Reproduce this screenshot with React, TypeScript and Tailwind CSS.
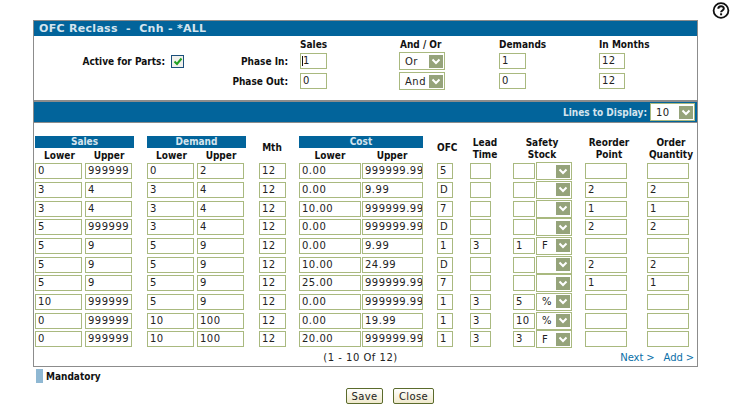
const font = "font-['DejaVu_Sans',sans-serif]";
const bold = "font-['DejaVu_Sans_Condensed','DejaVu_Sans',sans-serif] font-bold";

type RowData = {
  v: string[];
  unit?: string;
};

const rows: RowData[] = [
  { v: ["0", "999999", "0", "2", "12", "0.00", "999999.99", "5", "", "", "", ""], unit: "" },
  { v: ["3", "4", "3", "4", "12", "0.00", "9.99", "D", "", "", "2", "2"], unit: "" },
  { v: ["3", "4", "3", "4", "12", "10.00", "999999.99", "7", "", "", "1", "1"], unit: "" },
  { v: ["5", "999999", "3", "4", "12", "0.00", "999999.99", "D", "", "", "2", "2"], unit: "" },
  { v: ["5", "9", "5", "9", "12", "0.00", "9.99", "1", "3", "1", "", ""], unit: "F" },
  { v: ["5", "9", "5", "9", "12", "10.00", "24.99", "D", "", "", "2", "2"], unit: "" },
  { v: ["5", "9", "5", "9", "12", "25.00", "999999.99", "7", "", "", "1", "1"], unit: "" },
  { v: ["10", "999999", "5", "9", "12", "0.00", "999999.99", "1", "3", "5", "", ""], unit: "%" },
  { v: ["0", "999999", "10", "100", "12", "0.00", "19.99", "1", "3", "10", "", ""], unit: "%" },
  { v: ["0", "999999", "10", "100", "12", "20.00", "999999.99", "1", "3", "3", "", ""], unit: "F" },
];

function Field({ value, className, caret }: { value: string; className: string; caret?: boolean }) {
  return (
    <div
      className={`relative h-4 shrink-0 border border-[#a9b97f] bg-white pl-[2px] text-[10px] leading-[14px] tracking-[0.5px] text-[#222] overflow-hidden whitespace-nowrap ${className}`}
    >
      {value}
      {caret && <span className="absolute top-[2px] left-[1px] h-[10px] w-px bg-[#111]" />}
    </div>
  );
}

function Arrow() {
  return (
    <span className="flex h-[13px] w-[14px] shrink-0 items-center justify-center bg-[#95a37a]">
      <svg width="10" height="7" viewBox="0 0 10 7" fill="none" stroke="#fff" strokeWidth="2">
        <path d="M1.5 1.5 5 5l3.5-3.5" />
      </svg>
    </span>
  );
}

function Select({ value, className }: { value: string; className: string }) {
  return (
    <div
      className={`flex h-[18px] shrink-0 items-center justify-between border border-[#a9b97f] bg-white pr-[1px] pl-[5px] text-[10px] font-normal tracking-[0.5px] text-[#222] ${font} ${className}`}
    >
      <span>{value}</span>
      <Arrow />
    </div>
  );
}

function Head({ children, className }: { children: React.ReactNode; className: string }) {
  return <div className={`shrink-0 text-center text-[10px] leading-3 text-[#111] ${bold} ${className}`}>{children}</div>;
}

function Band({ children, className }: { children: React.ReactNode; className: string }) {
  return (
    <div className={`h-3 shrink-0 bg-[#02649b] text-center text-[10px] leading-3 text-[#d5e4ee] ${bold} ${className}`}>
      {children}
    </div>
  );
}

function HelpIcon() {
  return (
    <svg width="18" height="18" viewBox="0 0 18 18" fill="none" stroke="#111" className="shrink-0">
      <circle cx="9" cy="8.5" r="7.4" strokeWidth="1.8" />
      <path d="M6.3 6.7c0-3.3 5.5-3.3 5.5-.2 0 1.9-2.7 2-2.7 3.8" strokeWidth="2" />
      <path d="M9.1 11.3v2" strokeWidth="2" />
    </svg>
  );
}

function Button({ label, className }: { label: string; className: string }) {
  return (
    <div
      className={`flex h-4 items-center justify-center rounded-[2px] border border-[#5b6b2c] bg-gradient-to-b from-white to-[#efe9cc] text-[10px] tracking-[0.4px] text-[#222] ${className}`}
    >
      {label}
    </div>
  );
}

export default function App() {
  return (
    <div className={`relative h-[415px] w-[732px] overflow-hidden bg-white ${font}`}>
      <div className="flex h-5 justify-end pt-[2px] pr-[2px]">
        <HelpIcon />
      </div>

      <div className="mr-[34px] ml-[33px] h-[347px] border border-[#8c8c8c]">
        <div className="h-[15px] bg-[#02649b] pl-[5px] text-[11px] leading-[15px] font-bold tracking-[0.3px] text-[#d5e4ee]">
          OFC Reclass&nbsp; -&nbsp; Cnh -&nbsp;*ALL
        </div>

        {/* phase in / phase out */}
        <div className="h-[66px] border-b-2 border-[#8c8c8c]">
          <div className={`flex h-[15px] items-end text-[10px] leading-3 text-[#111] ${bold}`}>
            <span className="ml-[266px] w-[100px]">Sales</span>
            <span className="w-[99px]">And / Or</span>
            <span className="w-[100px]">Demands</span>
            <span>In Months</span>
          </div>
          <div className="flex h-[20px] items-center">
            <div className={`w-[131px] text-right text-[10px] text-[#111] ${bold}`}>Active for Parts:</div>
            <span className="ml-[6px] flex h-[13px] w-[13px] shrink-0 items-center justify-center border border-[#1c4f7c] bg-[#f1f1ec]">
              <svg width="10" height="9" viewBox="0 0 10 9" fill="none" stroke="#21a021" strokeWidth="2">
                <path d="M1.5 4.5 4 7l4.5-5.5" />
              </svg>
            </span>
            <div className={`w-[104px] text-right text-[10px] text-[#111] ${bold}`}>Phase In:</div>
            <Field value="1" caret className="ml-[12px] w-[27px]" />
            <Select value="Or" className="ml-[72px] w-[46px]" />
            <Field value="1" className="ml-[54px] w-[27px]" />
            <Field value="12" className="ml-[73px] w-[26px]" />
          </div>
          <div className="flex h-[20px] items-center">
            <div className={`w-[254px] text-right text-[10px] text-[#111] ${bold}`}>Phase Out:</div>
            <Field value="0" className="ml-[12px] w-[27px]" />
            <Select value="And" className="ml-[72px] w-[46px]" />
            <Field value="0" className="ml-[54px] w-[27px]" />
            <Field value="12" className="ml-[73px] w-[26px]" />
          </div>
        </div>

        {/* lines to display */}
        <div className={`flex h-[20px] items-center justify-end bg-[#02649b] pr-[2px] text-[10px] text-[#d5e4ee] ${bold}`}>
          <span className="mr-[3px]">Lines to Display:</span>
          <Select value="10" className="w-[45px]" />
        </div>

        <div className="border-t border-[#8c8c8c] pl-[1px]">
          {/* column headers */}
          <div className="mt-[13px] flex h-[26px] items-start">
            <div className="w-[99px] shrink-0">
              <Band className="w-[99px]">Sales</Band>
              <div className="mt-[2px] flex">
                <Head className="w-[49px]">Lower</Head>
                <Head className="w-[50px]">Upper</Head>
              </div>
            </div>
            <div className="ml-[13px] w-[99px] shrink-0">
              <Band className="w-[99px]">Demand</Band>
              <div className="mt-[2px] flex">
                <Head className="w-[49px]">Lower</Head>
                <Head className="w-[50px]">Upper</Head>
              </div>
            </div>
            <Head className="mt-[6px] ml-[11px] w-[30px]">Mth</Head>
            <div className="ml-[12px] w-[124px] shrink-0">
              <Band className="w-[124px]">Cost</Band>
              <div className="mt-[2px] flex">
                <Head className="w-[62px]">Lower</Head>
                <Head className="w-[62px]">Upper</Head>
              </div>
            </div>
            <Head className="mt-[6px] ml-[14px] w-[20px]">OFC</Head>
            <Head className="mt-[1px] ml-[13px] w-[30px]">Lead<br />Time</Head>
            <Head className="mt-[1px] ml-[12px] w-[60px]">Safety<br />Stock</Head>
            <Head className="mt-[1px] ml-[15px] w-[44px]">Reorder<br />Point</Head>
            <Head className="mt-[1px] ml-[16px] w-[48px]">Order<br />Quantity</Head>
          </div>

          {/* data rows */}
          <div>
            {rows.map((r, i) => (
              <div key={i} className="flex h-[18.67px] items-center">
                <Field value={r.v[0]} className="w-[47px]" />
                <Field value={r.v[1]} className="ml-[3px] w-[47px]" />
                <Field value={r.v[2]} className="ml-[15px] w-[47px]" />
                <Field value={r.v[3]} className="ml-[3px] w-[47px]" />
                <Field value={r.v[4]} className="ml-[15px] w-[27px]" />
                <Field value={r.v[5]} className="ml-[13px] w-[62px]" />
                <Field value={r.v[6]} className="ml-[1px] w-[61px]" />
                <Field value={r.v[7]} className="ml-[14px] w-[16px]" />
                <Field value={r.v[8]} className="ml-[17px] w-[21px]" />
                <Field value={r.v[9]} className="ml-[22px] w-[22px]" />
                <Select value={r.unit ?? ""} className="ml-[1px] w-[36px]" />
                <Field value={r.v[10]} className="ml-[13px] w-[42px]" />
                <Field value={r.v[11]} className="ml-[20px] w-[42px]" />
              </div>
            ))}
          </div>

          <div className="relative flex h-[17px] items-center justify-center pr-[6px] text-[10px] tracking-[0.5px] text-[#222]">
            <span className="mr-[5px]">(1 - 10 Of 12)</span>
            <div className="absolute right-[3px] flex gap-[9px] text-[10px] tracking-[-0.1px] text-[#0a6fa8]">
              <span>Next &gt;</span>
              <span>Add &gt;</span>
            </div>
          </div>
        </div>
      </div>

      <div className="mt-[2px] ml-[36px] flex h-[14px] items-center gap-[3px]">
        <span className="h-[14px] w-[7px] bg-[#8fb8d3]" />
        <span className={`text-[10px] text-[#111] ${bold}`}>Mandatory</span>
      </div>

      <div className="mt-[5px] flex justify-center gap-[10px] pl-[48px]">
        <Button label="Save" className="w-[37px]" />
        <Button label="Close" className="w-[41px]" />
      </div>
    </div>
  );
}
